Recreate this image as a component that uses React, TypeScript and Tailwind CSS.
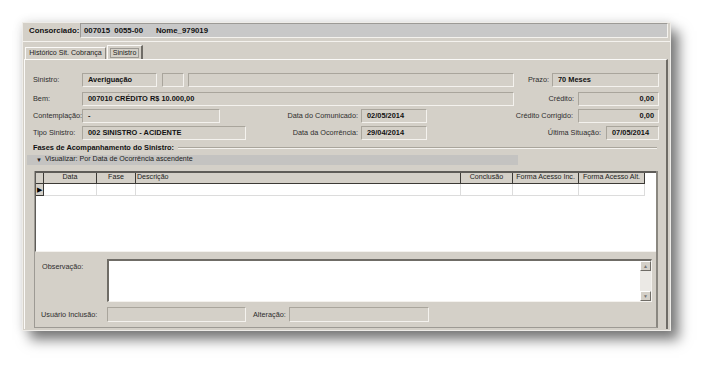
import React from 'react';

const font = "font-['Liberation_Sans',Arial,sans-serif]";

// sunken, disabled-looking edit box
function Field({ className = '', right = false, children }: { className?: string; right?: boolean; children?: React.ReactNode }) {
  return (
    <div
      className={`h-[14px] shrink-0 flex items-center bg-[#d4d0c8] border border-t-[#a9a59c] border-l-[#a9a59c] border-b-[#f4f2ee] border-r-[#f4f2ee] font-bold text-[7.4px] text-[#111] leading-none ${
        right ? 'justify-end pr-[4px]' : 'pl-[5px]'
      } ${className}`}
    >
      {children}
    </div>
  );
}

function Label({ className = '', children }: { className?: string; children: React.ReactNode }) {
  return <div className={`shrink-0 text-[7.3px] text-[#2e2e2e] leading-none ${className}`}>{children}</div>;
}

const columns = [
  { name: 'Data', w: 'w-[53px]', align: 'justify-center' },
  { name: 'Fase', w: 'w-[39px]', align: 'justify-center' },
  { name: 'Descrição', w: 'w-[325px]', align: 'justify-start pl-[1px]' },
  { name: 'Conclusão', w: 'w-[52px]', align: 'justify-center' },
  { name: 'Forma Acesso Inc.', w: 'w-[66px]', align: 'justify-center' },
  { name: 'Forma Acesso Alt.', w: 'w-[66px]', align: 'justify-center' },
];

export default function App() {
  return (
    <div className={`w-[713px] h-[374px] bg-white overflow-hidden ${font}`}>
      <div className="ml-[22px] mt-[22px] w-[649px] h-[309px] bg-[#d4d0c8] border border-[#eeece8] shadow-[0_0_10px_rgba(0,0,0,0.12),8px_9px_12px_rgba(0,0,0,0.5)] flex flex-col">
        {/* Consorciado header */}
        <div className="h-[19px] flex items-start border-b border-[#f4f2ee]">
          <div className="w-[57px] pl-[6px] h-[15px] flex items-center font-bold text-[7.8px] text-[#111]">Consorciado:</div>
          <div className="flex-1 mr-[2px] h-[15px] flex items-center pl-[3px] bg-[#c8c8c8] border border-t-[#9c9a96] border-l-[#9c9a96] border-b-[#f4f2ee] border-r-[#f4f2ee] font-bold text-[7.8px] text-[#111] whitespace-pre">
            007015  0055-00      Nome_979019
          </div>
        </div>

        {/* Tabs */}
        <div className="h-[17px] flex items-end pl-[2px]">
          <div className="w-[81px] h-[12px] flex items-center justify-center border-t border-l border-[#fbfaf8] border-r border-r-[#8a8780] text-[7.1px] text-[#222]">
            Histórico Sit. Cobrança
          </div>
          <div className="ml-[1px] w-[36px] h-[14px] flex items-center justify-center border-t border-l border-[#fbfaf8] border-r-2 border-r-[#6f6c66] text-[7.1px] text-[#222]">
            <span className="border border-[#9d9a94] px-[2px] leading-[8px]">Sinistro</span>
          </div>
        </div>

        {/* Panel */}
        <div className="ml-[1px] w-[644px] h-[270px] border-t border-l border-[#fbfaf8] border-r-2 border-r-[#6f6c66] flex flex-col">
          {/* Row 1 */}
          <div className="mt-[13px] pl-[8px] flex items-center">
            <Label className="w-[49px]">Sinistro:</Label>
            <Field className="w-[75px]">Averiguação</Field>
            <Field className="ml-[5px] w-[22px]" />
            <Field className="ml-[4px] w-[326px]" />
            <Label className="w-[38px] text-right pr-[3px]">Prazo:</Label>
            <Field className="w-[107px]">70 Meses</Field>
          </div>
          {/* Row 2 */}
          <div className="mt-[5px] pl-[8px] flex items-center">
            <Label className="w-[49px]">Bem:</Label>
            <Field className="w-[432px]">007010 CRÉDITO R$ 10.000,00</Field>
            <Label className="w-[64px] text-right pr-[4px]">Crédito:</Label>
            <Field className="w-[81px]" right>0,00</Field>
          </div>
          {/* Row 3 */}
          <div className="mt-[3px] pl-[8px] flex items-center">
            <Label className="w-[49px]">Contemplação:</Label>
            <Field className="w-[138px]">-</Field>
            <Label className="w-[141px] text-right pr-[3px]">Data do Comunicado:</Label>
            <Field className="w-[66px]">02/05/2014</Field>
            <Label className="w-[151px] text-right pr-[5px]">Crédito Corrigido:</Label>
            <Field className="w-[81px]" right>0,00</Field>
          </div>
          {/* Row 4 */}
          <div className="mt-[3px] pl-[8px] flex items-center">
            <Label className="w-[49px]">Tipo Sinistro:</Label>
            <Field className="w-[164px]">002 SINISTRO - ACIDENTE</Field>
            <Label className="w-[115px] text-right pr-[3px]">Data da Ocorrência:</Label>
            <Field className="w-[66px]">29/04/2014</Field>
            <Label className="w-[179px] text-right pr-[5px]">Última Situação:</Label>
            <Field className="w-[53px]">07/05/2014</Field>
          </div>

          {/* Group title */}
          <div className="mt-[3px] h-[9px] pl-[8px] pr-[9px] flex items-center">
            <div className="font-bold text-[7.4px] text-[#111] leading-none">Fases de Acompanhamento do Sinistro:</div>
            <div className="flex-1 ml-[4px] border-t border-t-[#a9a59c] border-b border-b-[#f4f2ee]" />
          </div>

          {/* Visualizar bar */}
          <div className="mt-[3px] ml-[2px] w-[491px] h-[10px] bg-[#c4c3c1] flex items-center pl-[9px] text-[7.1px] text-[#222] leading-none">
            <span className="text-[6px] mr-[3px]">▼</span>
            Visualizar: Por Data de Ocorrência ascendente
          </div>

          {/* Sub panel: grid + observation */}
          <div className="mt-[6px] ml-[9px] w-[624px] h-[157px] flex flex-col border-l border-b border-[#9d9a94] border-r-2 border-r-[#8a8780]">
            {/* Grid */}
            <div className="h-[81px] bg-white border-t-2 border-t-[#5e5c58] border-l border-l-[#5e5c58] border-b border-b-[#f4f2ee] flex flex-col">
              <div className="h-[11px] flex">
                <div className="w-[8px] bg-[#d4d0c8] border-r border-b border-[#3c3a36]" />
                {columns.map((c) => (
                  <div
                    key={c.name}
                    className={`${c.w} bg-[#d4d0c8] border-r border-b border-[#3c3a36] flex items-center ${c.align} text-[7.1px] text-[#222] leading-none`}
                  >
                    {c.name}
                  </div>
                ))}
              </div>
              <div className="h-[12px] flex">
                <div className="w-[8px] bg-[#d4d0c8] border-r border-b border-[#3c3a36] flex items-center justify-center text-[7px] leading-none text-black">
                  ▶
                </div>
                {columns.map((c) => (
                  <div key={c.name} className={`${c.w} border-r border-b border-[#dcdcdc]`} />
                ))}
              </div>
            </div>

            {/* Observação */}
            <div className="mt-[7px] pl-[7px] flex">
              <Label className="w-[65px] pt-[4px]">Observação:</Label>
              <div className="w-[545px] h-[43px] bg-white border-t-2 border-l-2 border-[#6f6c66] border-b border-r border-b-[#f4f2ee] border-r-[#f4f2ee] flex justify-end">
                <div className="w-[11px] bg-[#ebe9e5] flex flex-col justify-between">
                  <div className="h-[10px] bg-[#d4d0c8] border border-t-white border-l-white border-b-[#6f6c66] border-r-[#6f6c66] flex items-center justify-center text-[5px] text-[#777] leading-none">▲</div>
                  <div className="h-[10px] bg-[#d4d0c8] border border-t-white border-l-white border-b-[#6f6c66] border-r-[#6f6c66] flex items-center justify-center text-[5px] text-[#777] leading-none">▼</div>
                </div>
              </div>
            </div>

            {/* Usuário */}
            <div className="mt-[5px] pl-[6px] flex items-center">
              <Label className="w-[66px]">Usuário Inclusão:</Label>
              <Field className="w-[139px] h-[15px]" />
              <Label className="ml-[7px] w-[36px]">Alteração:</Label>
              <Field className="w-[140px] h-[15px]" />
            </div>
          </div>
        </div>
      </div>
    </div>
  );
}
